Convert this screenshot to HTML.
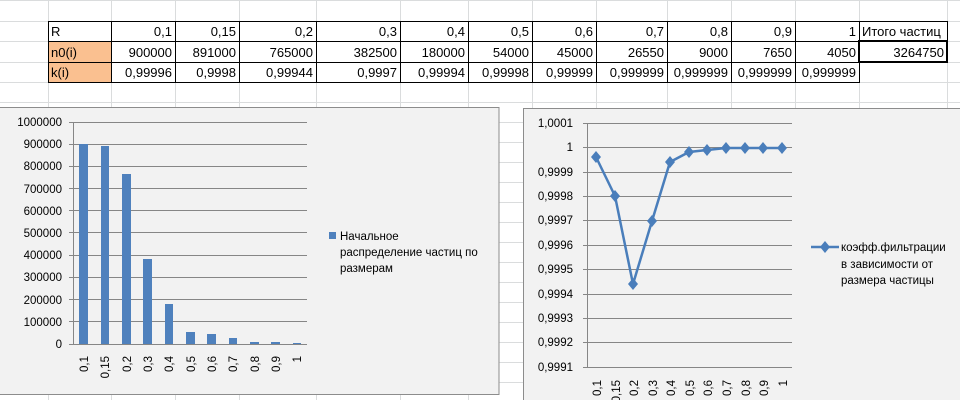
<!DOCTYPE html>
<html><head><meta charset="utf-8"><style>
body{margin:0;width:960px;height:400px;overflow:hidden;background:#fff;font-family:"Liberation Sans",sans-serif}
svg{position:absolute;left:0;top:0}
</style></head><body>
<svg width="960" height="400" xmlns="http://www.w3.org/2000/svg" font-family="Liberation Sans, sans-serif">
<g stroke="#dadcdd" stroke-width="1">
<line x1="0" y1="0.5" x2="960" y2="0.5"/><line x1="0" y1="21.5" x2="960" y2="21.5"/><line x1="0" y1="41.5" x2="960" y2="41.5"/><line x1="0" y1="62.5" x2="960" y2="62.5"/><line x1="0" y1="82.5" x2="960" y2="82.5"/><line x1="0" y1="102.5" x2="960" y2="102.5"/>
<line x1="0" y1="122.5" x2="960" y2="122.5"/><line x1="0" y1="142.5" x2="960" y2="142.5"/><line x1="0" y1="162.5" x2="960" y2="162.5"/><line x1="0" y1="182.5" x2="960" y2="182.5"/><line x1="0" y1="202.5" x2="960" y2="202.5"/><line x1="0" y1="222.5" x2="960" y2="222.5"/><line x1="0" y1="242.5" x2="960" y2="242.5"/><line x1="0" y1="262.5" x2="960" y2="262.5"/><line x1="0" y1="282.5" x2="960" y2="282.5"/><line x1="0" y1="302.5" x2="960" y2="302.5"/><line x1="0" y1="322.5" x2="960" y2="322.5"/><line x1="0" y1="342.5" x2="960" y2="342.5"/><line x1="0" y1="362.5" x2="960" y2="362.5"/><line x1="0" y1="382.5" x2="960" y2="382.5"/>
<line x1="48.5" y1="0" x2="48.5" y2="400"/><line x1="111.5" y1="0" x2="111.5" y2="400"/><line x1="175.5" y1="0" x2="175.5" y2="400"/><line x1="239.5" y1="0" x2="239.5" y2="400"/><line x1="316.5" y1="0" x2="316.5" y2="400"/><line x1="400.5" y1="0" x2="400.5" y2="400"/><line x1="468.5" y1="0" x2="468.5" y2="400"/><line x1="532.5" y1="0" x2="532.5" y2="400"/><line x1="596.5" y1="0" x2="596.5" y2="400"/><line x1="667.5" y1="0" x2="667.5" y2="400"/><line x1="731.5" y1="0" x2="731.5" y2="400"/><line x1="795.5" y1="0" x2="795.5" y2="400"/><line x1="859.5" y1="0" x2="859.5" y2="400"/><line x1="947.5" y1="0" x2="947.5" y2="400"/>
</g>
<rect x="48" y="41" width="63" height="41" fill="#fac090"/>
<g stroke="#000" stroke-width="1" fill="none">
<rect x="48.5" y="21.5" width="811" height="61"/>
<line x1="48" y1="41.5" x2="947" y2="41.5"/><line x1="48" y1="62.5" x2="859" y2="62.5"/>
<line x1="111.5" y1="21" x2="111.5" y2="83"/><line x1="175.5" y1="21" x2="175.5" y2="83"/><line x1="239.5" y1="21" x2="239.5" y2="83"/><line x1="316.5" y1="21" x2="316.5" y2="83"/><line x1="400.5" y1="21" x2="400.5" y2="83"/><line x1="468.5" y1="21" x2="468.5" y2="83"/><line x1="532.5" y1="21" x2="532.5" y2="83"/><line x1="596.5" y1="21" x2="596.5" y2="83"/><line x1="667.5" y1="21" x2="667.5" y2="83"/><line x1="731.5" y1="21" x2="731.5" y2="83"/><line x1="795.5" y1="21" x2="795.5" y2="83"/>
<line x1="859.5" y1="21.5" x2="947.5" y2="21.5"/><line x1="947.5" y1="21" x2="947.5" y2="41"/>
</g>
<rect x="859" y="41" width="88" height="21" fill="none" stroke="#000" stroke-width="2"/>
<g font-size="13" fill="#000">
<text x="51" y="36">R</text><text x="51" y="57">n0(i)</text><text x="51" y="77">k(i)</text>
<g text-anchor="end">
<text x="172" y="36">0,1</text><text x="236" y="36">0,15</text><text x="313" y="36">0,2</text><text x="397" y="36">0,3</text><text x="465" y="36">0,4</text><text x="529" y="36">0,5</text><text x="593" y="36">0,6</text><text x="664" y="36">0,7</text><text x="728" y="36">0,8</text><text x="792" y="36">0,9</text><text x="856" y="36">1</text>
<text x="172" y="57">900000</text><text x="236" y="57">891000</text><text x="313" y="57">765000</text><text x="397" y="57">382500</text><text x="465" y="57">180000</text><text x="529" y="57">54000</text><text x="593" y="57">45000</text><text x="664" y="57">26550</text><text x="728" y="57">9000</text><text x="792" y="57">7650</text><text x="856" y="57">4050</text><text x="944" y="57">3264750</text>
<text x="172" y="77">0,99996</text><text x="236" y="77">0,9998</text><text x="313" y="77">0,99944</text><text x="397" y="77">0,9997</text><text x="465" y="77">0,99994</text><text x="529" y="77">0,99998</text><text x="593" y="77">0,99999</text><text x="664" y="77">0,999999</text><text x="728" y="77">0,999999</text><text x="792" y="77">0,999999</text><text x="856" y="77">0,999999</text>
</g>
<text x="862" y="36">Итого частиц</text>
</g>
<!-- chart 1 -->
<rect x="-1" y="107.5" width="500" height="287" fill="#f2f2f2" stroke="#8c8c8c"/>
<g stroke="#868686" stroke-width="1">
<line x1="69" y1="122.5" x2="307" y2="122.5"/><line x1="69" y1="144.5" x2="307" y2="144.5"/><line x1="69" y1="166.5" x2="307" y2="166.5"/><line x1="69" y1="188.5" x2="307" y2="188.5"/><line x1="69" y1="210.5" x2="307" y2="210.5"/><line x1="69" y1="232.5" x2="307" y2="232.5"/><line x1="69" y1="255.5" x2="307" y2="255.5"/><line x1="69" y1="277.5" x2="307" y2="277.5"/><line x1="69" y1="299.5" x2="307" y2="299.5"/><line x1="69" y1="321.5" x2="307" y2="321.5"/><line x1="69" y1="344.5" x2="307" y2="344.5"/>
<line x1="73.5" y1="122" x2="73.5" y2="344"/>
</g>
<g fill="#4f81bd">
<rect x="79" y="144" width="9" height="200"/><rect x="101" y="146" width="8" height="198"/><rect x="122" y="174" width="9" height="170"/><rect x="143" y="259" width="9" height="85"/><rect x="165" y="304" width="8" height="40"/><rect x="186" y="332" width="9" height="12"/><rect x="207" y="334" width="9" height="10"/><rect x="229" y="338" width="8" height="6"/><rect x="250" y="342" width="9" height="2"/><rect x="271" y="342" width="9" height="2"/><rect x="293" y="343" width="8" height="1"/>
<rect x="329" y="232" width="7" height="7"/>
</g>
<g font-size="11.5" fill="#000" text-anchor="end">
<text x="62" y="126">1000000</text><text x="62" y="148">900000</text><text x="62" y="170">800000</text><text x="62" y="193">700000</text><text x="62" y="215">600000</text><text x="62" y="237">500000</text><text x="62" y="259">400000</text><text x="62" y="281">300000</text><text x="62" y="304">200000</text><text x="62" y="326">100000</text><text x="62" y="348">0</text>
</g>
<g font-size="11.5" fill="#000" text-anchor="end">
<text transform="translate(88,356) rotate(-90)">0,1</text><text transform="translate(109,356) rotate(-90)">0,15</text><text transform="translate(131,356) rotate(-90)">0,2</text><text transform="translate(152,356) rotate(-90)">0,3</text><text transform="translate(173,356) rotate(-90)">0,4</text><text transform="translate(195,356) rotate(-90)">0,5</text><text transform="translate(216,356) rotate(-90)">0,6</text><text transform="translate(237,356) rotate(-90)">0,7</text><text transform="translate(259,356) rotate(-90)">0,8</text><text transform="translate(280,356) rotate(-90)">0,9</text><text transform="translate(301,356) rotate(-90)">1</text>
</g>
<g font-size="11.5" fill="#000"><text x="340" y="240">Начальное</text><text x="340" y="256">распределение частиц по</text><text x="340" y="272">размерам</text></g>
<!-- chart 2 -->
<rect x="523.5" y="108.5" width="440" height="300" fill="#f2f2f2" stroke="#8c8c8c"/>
<g stroke="#868686" stroke-width="1">
<line x1="583" y1="123.5" x2="792" y2="123.5"/><line x1="583" y1="147.5" x2="792" y2="147.5"/><line x1="583" y1="172.5" x2="792" y2="172.5"/><line x1="583" y1="196.5" x2="792" y2="196.5"/><line x1="583" y1="220.5" x2="792" y2="220.5"/><line x1="583" y1="245.5" x2="792" y2="245.5"/><line x1="583" y1="269.5" x2="792" y2="269.5"/><line x1="583" y1="294.5" x2="792" y2="294.5"/><line x1="583" y1="318.5" x2="792" y2="318.5"/><line x1="583" y1="342.5" x2="792" y2="342.5"/><line x1="583" y1="367.5" x2="792" y2="367.5"/>
<line x1="587.5" y1="123" x2="587.5" y2="367"/>
</g>
<g font-size="11.5" fill="#000" text-anchor="end">
<text x="573" y="127">1,0001</text><text x="573" y="151">1</text><text x="573" y="176">0,9999</text><text x="573" y="200">0,9998</text><text x="573" y="224">0,9997</text><text x="573" y="249">0,9996</text><text x="573" y="273">0,9995</text><text x="573" y="298">0,9994</text><text x="573" y="322">0,9993</text><text x="573" y="346">0,9992</text><text x="573" y="371">0,9991</text>
</g>
<polyline fill="none" stroke="#4a7ebb" stroke-width="2.5" points="596,157 615,196 633,284 652,221 670,162 689,152 707,150 726,148 745,148 763,148 782,148"/>
<g fill="#4a7ebb">
<path d="M596 151l5 6-5 6-5-6z"/><path d="M615 190l5 6-5 6-5-6z"/><path d="M633 278l5 6-5 6-5-6z"/><path d="M652 215l5 6-5 6-5-6z"/><path d="M670 156l5 6-5 6-5-6z"/><path d="M689 146l5 6-5 6-5-6z"/><path d="M707 144l5 6-5 6-5-6z"/><path d="M726 142l5 6-5 6-5-6z"/><path d="M745 142l5 6-5 6-5-6z"/><path d="M763 142l5 6-5 6-5-6z"/><path d="M782 142l5 6-5 6-5-6z"/>
<path d="M825 241l5 6-5 6-5-6z"/>
</g>
<line x1="811" y1="247" x2="839" y2="247" stroke="#4a7ebb" stroke-width="2.5"/>
<g font-size="11.5" fill="#000"><text x="841" y="251">коэфф.фильтрации</text><text x="841" y="268">в зависимости от</text><text x="841" y="284">размера частицы</text></g>
<g font-size="11.5" fill="#000" text-anchor="end">
<text transform="translate(601,380) rotate(-90)">0,1</text><text transform="translate(620,380) rotate(-90)">0,15</text><text transform="translate(638,380) rotate(-90)">0,2</text><text transform="translate(657,380) rotate(-90)">0,3</text><text transform="translate(675,380) rotate(-90)">0,4</text><text transform="translate(694,380) rotate(-90)">0,5</text><text transform="translate(712,380) rotate(-90)">0,6</text><text transform="translate(731,380) rotate(-90)">0,7</text><text transform="translate(750,380) rotate(-90)">0,8</text><text transform="translate(768,380) rotate(-90)">0,9</text><text transform="translate(787,380) rotate(-90)">1</text>
</g>
</svg>
</body></html>
